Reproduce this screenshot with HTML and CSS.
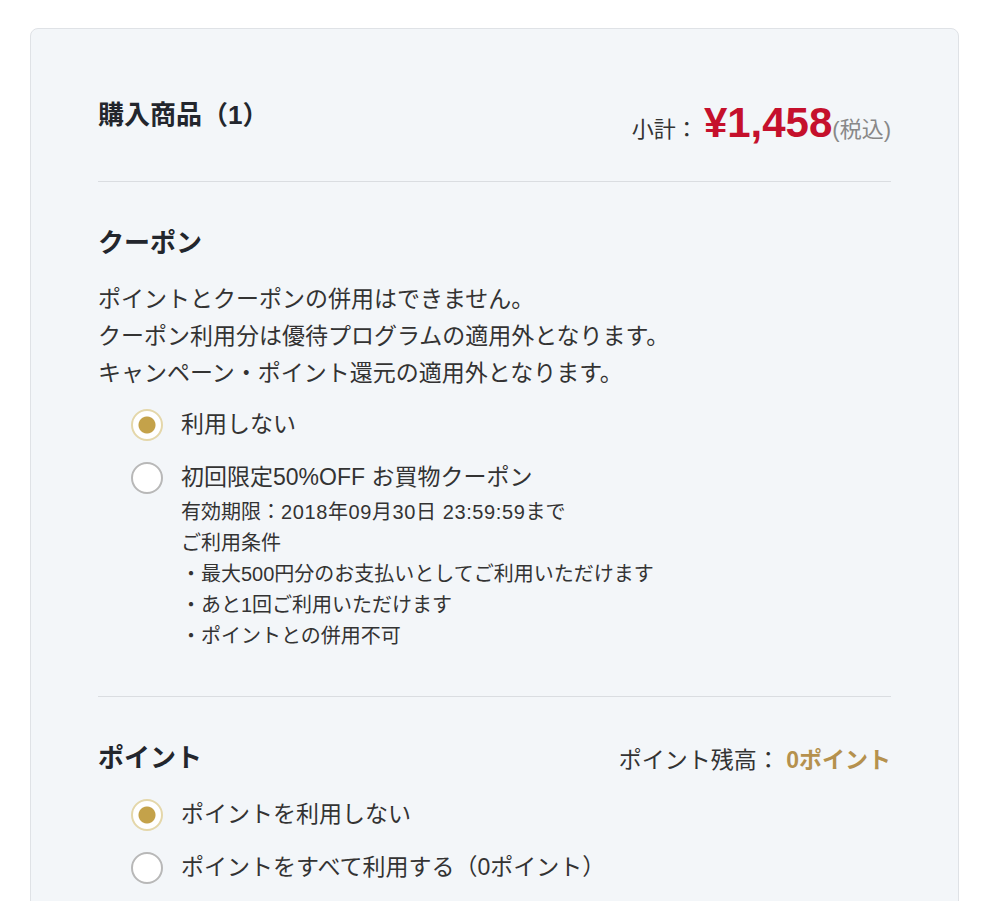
FILE: index.html
```html
<!DOCTYPE html>
<html lang="ja">

<head>
    <meta charset="UTF-8">
    <meta name="viewport" content="width=device-width, initial-scale=1.0">
    <title>ご注文手続き</title>
    <link rel="stylesheet" href="styles.css">
</head>

<body>
    <div class="card">
        <div class="sec head">
            <h2 class="title">購入商品（1）</h2>
            <p class="subtotal">小計： <span class="price">¥1,458</span><span class="tax">(税込)</span></p>
        </div>

        <div class="sec coupon">
            <h2 class="title">クーポン</h2>
            <p class="notes">
                ポイントとクーポンの併用はできません。<br>
                クーポン利用分は優待プログラムの適用外となります。<br>
                キャンペーン・ポイント還元の適用外となります。
            </p>

            <div class="options">
                <label class="opt">
                    <input type="radio" name="coupon" checked>
                    <span>利用しない</span>
                </label>
                <label class="opt">
                    <input type="radio" name="coupon">
                    <span>初回限定50%OFF お買物クーポン</span>
                </label>
                <div class="detail">
                    <p>有効期限：<span class="num">2018年09月30日 23:59:59</span>まで</p>
                    <p>ご利用条件</p>
                    <p>・最大500円分のお支払いとしてご利用いただけます</p>
                    <p>・あと1回ご利用いただけます</p>
                    <p>・ポイントとの併用不可</p>
                </div>
            </div>
        </div>

        <div class="sec point">
            <div class="point-head">
                <h2 class="title">ポイント</h2>
                <p class="balance">ポイント残高： <span class="pt">0ポイント</span></p>
            </div>

            <div class="options">
                <label class="opt">
                    <input type="radio" name="point" checked>
                    <span>ポイントを利用しない</span>
                </label>
                <label class="opt">
                    <input type="radio" name="point">
                    <span>ポイントをすべて利用する（0ポイント）</span>
                </label>
            </div>
        </div>
    </div>
</body>

</html>
```

FILE: styles.css
```css
* {
    margin: 0;
    padding: 0;
    box-sizing: border-box;
}

body {
    background: #fff;
    font-family: "Liberation Sans", "Noto Sans CJK JP", sans-serif;
    color: #333;
}

.card {
    width: 929px;
    margin: 28px 0 0 30px;
    padding: 0 67px 40px;
    background: #f3f6f9;
    border: 1px solid #dfe2e6;
    border-radius: 8px;
}

.sec {
    border-bottom: 1px solid #dadde1;
}

.sec:last-child {
    border-bottom: 0;
}

.title {
    font-size: 26px;
    line-height: 36px;
    font-weight: 700;
    color: #23262d;
}

/* header */
.head {
    display: flex;
    justify-content: space-between;
    align-items: flex-start;
    padding: 68px 0 29px;
}

.subtotal {
    margin-top: 4px;
    font-size: 22px;
    line-height: 44px;
}

.price {
    font-size: 42px;
    font-weight: 700;
    color: #c5102c;
}

.tax {
    font-size: 22px;
    color: #888;
}

/* coupon */
.coupon {
    padding: 43px 0 44px;
}

.notes {
    margin-top: 20px;
    font-size: 23px;
    line-height: 37px;
}

.options {
    margin-top: 17px;
    padding-left: 33px;
    display: flex;
    flex-direction: column;
    gap: 21px;
}

.point .options {
    margin-top: 23px;
}

.opt {
    display: flex;
    align-items: center;
    gap: 18px;
    font-size: 23px;
    line-height: 32px;
    cursor: pointer;
}

.opt span {
    margin-top: -3px;
}

.opt input {
    appearance: none;
    -webkit-appearance: none;
    width: 32px;
    height: 32px;
    border-radius: 50%;
    border: 2px solid #b8b8b8;
    background: #fff;
    flex-shrink: 0;
}

.opt input:checked {
    border-color: #e4d7aa;
    background: radial-gradient(circle, #c4a24a 0 8px, #fff 9px);
}

.detail {
    margin-top: -18px;
    padding-left: 50px;
    font-size: 20px;
    line-height: 31px;
}

.detail .num {
    letter-spacing: 0.6px;
}

/* point */
.point {
    padding-top: 43px;
}

.point-head {
    display: flex;
    justify-content: space-between;
    align-items: center;
}

.balance {
    font-size: 23px;
}

.pt {
    color: #b5914e;
    font-weight: 700;
}
```
